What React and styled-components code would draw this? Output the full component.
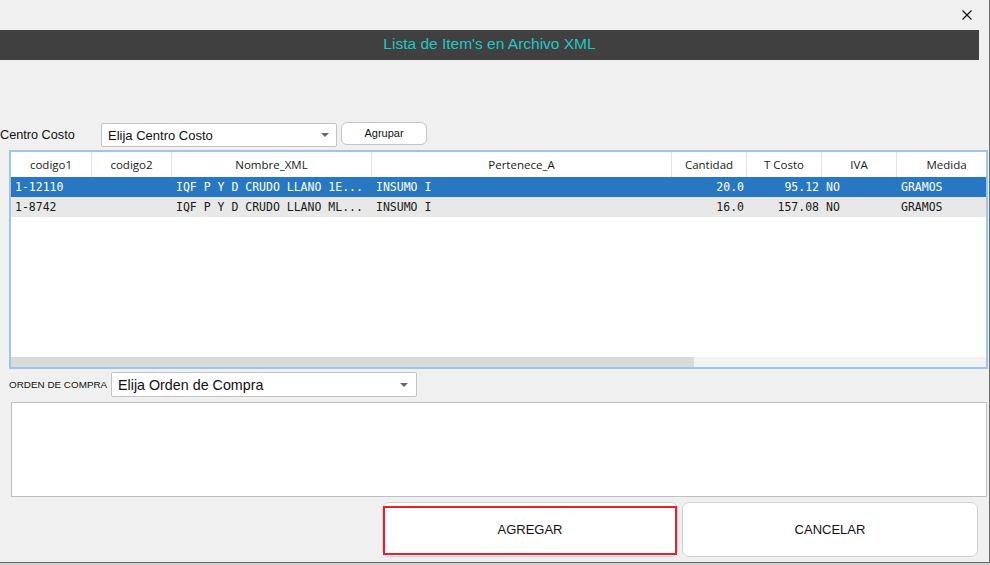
import React from "react";
import styled, { createGlobalStyle } from "styled-components";

const Global = createGlobalStyle`
  html, body { margin: 0; padding: 0; background: #cfcfcf; overflow: hidden; }
  * { box-sizing: border-box; }
`;

const Window = styled.div`
  width: 990px;
  height: 563px;
  background: #f0f0f0;
  border-right: 1px solid #6a6a6a;
  border-bottom: 1px solid #6a6a6a;
  display: flex;
  flex-direction: column;
  font-family: "Liberation Sans", Arial, sans-serif;
  color: #111;
  overflow: hidden;
`;

const TopBar = styled.div`
  height: 30px;
  display: flex;
  justify-content: flex-end;
  align-items: flex-start;
  padding: 10px 17px 0 0;
`;

const CloseBtn = styled.button`
  width: 10px;
  height: 10px;
  padding: 0;
  border: none;
  background: transparent;
  display: flex;
  cursor: pointer;
`;

const TitleBar = styled.div`
  width: 979px;
  height: 30px;
  background: #404040;
  color: #22c6c6;
  font-size: 15.5px;
  display: flex;
  align-items: center;
  justify-content: center;
  padding-bottom: 2px;
`;

const FilterRow = styled.div`
  display: flex;
  align-items: flex-start;
  margin-top: 62px;
  height: 25px;
`;

const Label = styled.span`
  font-size: ${(p) => p.$size || 12.7}px;
  color: #111;
  width: ${(p) => p.$w}px;
  padding-left: ${(p) => p.$pl || 0}px;
  align-self: center;
  white-space: nowrap;
`;

const Combo = styled.div`
  width: ${(p) => p.$w}px;
  height: ${(p) => p.$h}px;
  margin-top: ${(p) => p.$mt || 0}px;
  background: #fff;
  border: 1px solid #c3c3c3;
  border-radius: 2px;
  display: flex;
  align-items: center;
  justify-content: space-between;
  padding: 0 ${(p) => p.$ar}px 0 6px;
  font-size: ${(p) => p.$fs}px;
  color: #111;
`;

const Arrow = styled.span`
  width: 0;
  height: 0;
  border-left: 4px solid transparent;
  border-right: 4px solid transparent;
  border-top: 4px solid #666;
`;

const SmallButton = styled.button`
  width: 86px;
  height: 23px;
  margin-left: 4px;
  background: #fff;
  border: 1px solid #c4c4c4;
  border-radius: 6px;
  font-family: "Liberation Sans", Arial, sans-serif;
  font-size: 11px;
  color: #111;
  padding: 0 0 1px;
`;

const TableFrame = styled.div`
  margin: 3px 0 0 9px;
  width: 979px;
  height: 219px;
  border: 2px solid #9fc5ea;
  background: #fff;
  display: flex;
  flex-direction: column;
  overflow: hidden;
`;

const Grid = styled.div`
  flex: 1;
  display: grid;
  grid-template-columns: 81px 80px 200px 300px 75px 75px 75px 100px;
  grid-auto-rows: 20px;
  grid-template-rows: 25px;
  align-content: start;
  width: 986px;
`;

const HeadCell = styled.div`
  border-right: 1px solid #e4e4e4;
  display: flex;
  align-items: center;
  justify-content: center;
  font-family: "Open Sans", sans-serif;
  font-size: 11.5px;
  color: #1a1a1a;
  padding-bottom: 1px;
`;

const Cell = styled.div`
  background: ${(p) => (p.$sel ? "#2877c3" : "#e8e8e8")};
  color: ${(p) => (p.$sel ? "#fff" : "#1a1a1a")};
  font-family: "DejaVu Sans Mono", "Liberation Mono", monospace;
  font-size: 11.5px;
  display: flex;
  align-items: center;
  justify-content: ${(p) => (p.$right ? "flex-end" : "flex-start")};
  padding: 0 3px 0 4px;
  white-space: pre;
  overflow: hidden;
`;

const ScrollTrack = styled.div`
  height: 10px;
  background: #f3f3f3;
  display: flex;
`;

const ScrollThumb = styled.div`
  width: 683px;
  background: #dadada;
`;

const OrderRow = styled.div`
  display: flex;
  margin-top: 3px;
  height: 25px;
  align-items: center;
`;

const NotesBox = styled.div`
  margin: 5px 0 0 11px;
  width: 976px;
  height: 95px;
  background: #fff;
  border: 1px solid #bfbfbf;
`;

const ButtonRow = styled.div`
  display: flex;
  gap: 4px;
  margin: 5px 0 0 382px;
`;

const BigButton = styled.button`
  position: relative;
  width: 296px;
  height: 55px;
  background: #fff;
  border: 1px solid #d2d2d2;
  border-radius: 7px;
  font-family: "Liberation Sans", Arial, sans-serif;
  font-size: 13px;
  color: #111;
  padding: 0;
  &::after {
    content: "";
    display: ${(p) => (p.$focus ? "block" : "none")};
    position: absolute;
    left: 0;
    right: 0;
    top: 3px;
    bottom: 1px;
    border: 2.5px solid #e5202a;
  }
`;

const headers = ["codigo1", "codigo2", "Nombre_XML", "Pertenece_A", "Cantidad", "T Costo", "IVA", "Medida"];

const rows = [
  ["1-12110", "", "IQF P Y D CRUDO LLANO 1E...", "INSUMO I", "20.0", "95.12", "NO", "GRAMOS"],
  ["1-8742", "", "IQF P Y D CRUDO LLANO ML...", "INSUMO I", "16.0", "157.08", "NO", "GRAMOS"],
];

export default function App() {
  return (
    <>
      <Global />
      <Window>
        <TopBar>
          <CloseBtn aria-label="Cerrar">
            <svg width="10" height="10" viewBox="0 0 10 10">
              <path d="M0.5 0.5 L9.5 9.5 M9.5 0.5 L0.5 9.5" stroke="#111" strokeWidth="1.2" />
            </svg>
          </CloseBtn>
        </TopBar>
        <TitleBar>Lista de Item's en Archivo XML</TitleBar>
        <FilterRow>
          <Label $w={101}>Centro Costo</Label>
          <Combo $w={236} $h={24} $mt={1} $fs={13} $ar={7}>
            <span>Elija Centro Costo</span>
            <Arrow />
          </Combo>
          <SmallButton>Agrupar</SmallButton>
        </FilterRow>
        <TableFrame>
          <Grid>
            {headers.map((h) => (
              <HeadCell key={h}>{h}</HeadCell>
            ))}
            {rows.map((r, i) =>
              r.map((v, j) => (
                <Cell key={i + "-" + j} $sel={i === 0} $right={j === 4 || j === 5}>
                  {v}
                </Cell>
              ))
            )}
          </Grid>
          <ScrollTrack>
            <ScrollThumb />
          </ScrollTrack>
        </TableFrame>
        <OrderRow>
          <Label $w={111} $pl={9} $size={9.9}>ORDEN DE COMPRA</Label>
          <Combo $w={306} $h={25} $fs={14.3} $ar={8}>
            <span>Elija Orden de Compra</span>
            <Arrow />
          </Combo>
        </OrderRow>
        <NotesBox />
        <ButtonRow>
          <BigButton $focus>AGREGAR</BigButton>
          <BigButton>CANCELAR</BigButton>
        </ButtonRow>
      </Window>
    </>
  );
}
